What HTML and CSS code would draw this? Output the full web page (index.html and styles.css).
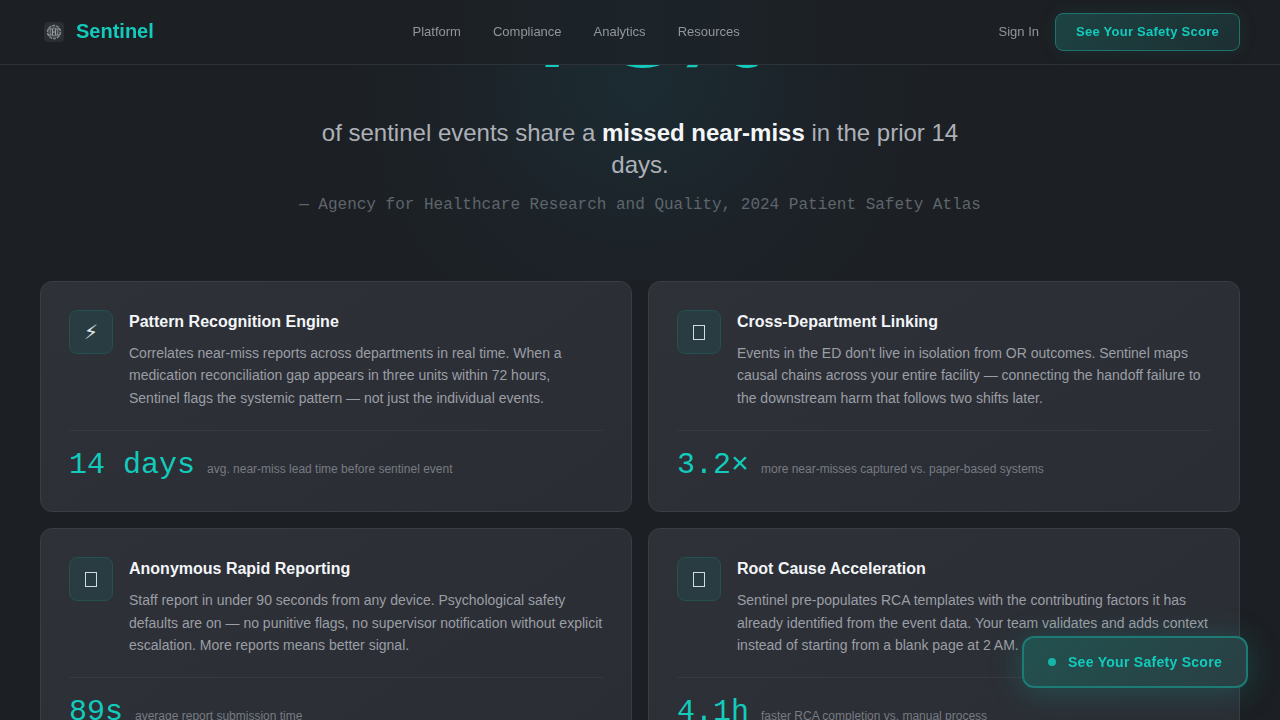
FILE: index.html
```html
<!DOCTYPE html>
<html lang="en">
<head>
    <meta charset="UTF-8">
    <meta name="viewport" content="width=device-width, initial-scale=1.0">
    <title>Sentinel</title>
    <link rel="stylesheet" href="styles.css">
</head>
<body>

<header class="header">
    <a class="logo" href="#">
        <svg class="logo-mark" viewBox="0 0 28 28" aria-hidden="true">
            <rect x="4" y="4" width="20" height="20" rx="4" fill="#2a2f33"/>
            <circle cx="14" cy="14" r="6.5" fill="#3d4245" stroke="#80868a" stroke-width="1.5" stroke-dasharray="3 1"/>
            <circle cx="14" cy="14" r="4" fill="none" stroke="#777d80" stroke-width="1"/>
            <path d="M8 11h3M17 11h3M8 17h3M17 17h3M12.5 11v6M15.5 11v6M12.5 14h3" stroke="#979c9f" stroke-width="1" fill="none"/>
        </svg>
        <span>Sentinel</span>
    </a>
    <nav class="nav">
        <a href="#">Platform</a>
        <a href="#">Compliance</a>
        <a href="#">Analytics</a>
        <a href="#">Resources</a>
    </nav>
    <div class="header-actions">
        <a class="sign-in" href="#">Sign In</a>
        <button type="button" class="score-btn">See Your Safety Score</button>
    </div>
</header>

<main>
    <section class="hero">
        <div class="hero-number">73%</div>
        <p class="hero-text">of sentinel events share a <strong>missed near-miss</strong> in the prior 14 days.</p>
        <p class="hero-source">— Agency for Healthcare Research and Quality, 2024 Patient Safety Atlas</p>
    </section>

    <section class="cards">
        <article class="card">
            <div class="card-top">
                <div class="card-icon">&#9889;&#xFE0E;</div>
                <div class="card-body">
                    <h2>Pattern Recognition Engine</h2>
                    <p>Correlates near-miss reports across departments in real time. When a medication reconciliation gap appears in three units within 72 hours, Sentinel flags the systemic pattern — not just the individual events.</p>
                </div>
            </div>
            <div class="card-stat">
                <span class="stat-value">14 days</span>
                <span class="stat-label">avg. near-miss lead time before sentinel event</span>
            </div>
        </article>

        <article class="card">
            <div class="card-top">
                <div class="card-icon"><svg width="12" height="15" viewBox="0 0 12 15"><rect x="0.5" y="0.5" width="11" height="14"/></svg></div>
                <div class="card-body">
                    <h2>Cross-Department Linking</h2>
                    <p>Events in the ED don't live in isolation from OR outcomes. Sentinel maps causal chains across your entire facility — connecting the handoff failure to the downstream harm that follows two shifts later.</p>
                </div>
            </div>
            <div class="card-stat">
                <span class="stat-value">3.2×</span>
                <span class="stat-label">more near-misses captured vs. paper-based systems</span>
            </div>
        </article>

        <article class="card">
            <div class="card-top">
                <div class="card-icon"><svg width="12" height="15" viewBox="0 0 12 15"><rect x="0.5" y="0.5" width="11" height="14"/></svg></div>
                <div class="card-body">
                    <h2>Anonymous Rapid Reporting</h2>
                    <p>Staff report in under 90 seconds from any device. Psychological safety defaults are on — no punitive flags, no supervisor notification without explicit escalation. More reports means better signal.</p>
                </div>
            </div>
            <div class="card-stat">
                <span class="stat-value">89s</span>
                <span class="stat-label">average report submission time</span>
            </div>
        </article>

        <article class="card">
            <div class="card-top">
                <div class="card-icon"><svg width="12" height="15" viewBox="0 0 12 15"><rect x="0.5" y="0.5" width="11" height="14"/></svg></div>
                <div class="card-body">
                    <h2>Root Cause Acceleration</h2>
                    <p>Sentinel pre-populates RCA templates with the contributing factors it has already identified from the event data. Your team validates and adds context instead of starting from a blank page at 2 AM.</p>
                </div>
            </div>
            <div class="card-stat">
                <span class="stat-value">4.1h</span>
                <span class="stat-label">faster RCA completion vs. manual process</span>
            </div>
        </article>
    </section>
</main>

<button type="button" class="floating-btn"><span class="dot"></span>See Your Safety Score</button>

</body>
</html>
```

FILE: styles.css
```css
* {
    box-sizing: border-box;
    margin: 0;
    padding: 0;
}

html {
    scrollbar-width: none;
}

body {
    font-family: "Liberation Sans", Arial, sans-serif;
    background-color: #1c1f23;
    color: #f3f5f7;
    overflow-x: hidden;
}

a {
    text-decoration: none;
}

button {
    font-family: inherit;
    font-weight: 700;
    letter-spacing: 0.02em;
    color: #12cbbd;
    cursor: pointer;
}

/* Header */
.header {
    position: fixed;
    top: 0;
    left: 0;
    right: 0;
    z-index: 10;
    display: flex;
    align-items: center;
    justify-content: space-between;
    height: 65px;
    padding: 0 40px 1px;
    background: linear-gradient(90deg, #1c1f23 30%, #1c2429 50%, #1c1f23 70%);
    border-bottom: 1px solid #2e3338;
}

.logo {
    display: flex;
    align-items: center;
    gap: 8px;
    font-size: 20px;
    font-weight: 700;
    color: #12cbbd;
}

.logo-mark {
    width: 28px;
    height: 28px;
}

.nav {
    display: flex;
    gap: 32px;
}

.nav a,
.sign-in {
    font-size: 13px;
    color: #92959b;
}

.header-actions {
    display: flex;
    align-items: center;
    gap: 16px;
}

.score-btn {
    height: 38px;
    padding: 0 20px;
    font-size: 13px;
    background: linear-gradient(135deg, #1d4343, #1d2f32);
    border: 1px solid #1f736e;
    border-radius: 8px;
    box-shadow: 0 0 20px rgba(25, 203, 187, 0.08);
}

/* Hero */
.hero {
    display: flex;
    flex-direction: column;
    align-items: center;
    margin-top: -43px;
    padding-bottom: 67px;
    text-align: center;
    background:
        radial-gradient(circle at 50% 100px, rgba(20, 184, 166, 0.05), transparent 200px),
        radial-gradient(circle at 50% 140px, rgba(28, 50, 66, 0.3), transparent 360px);
}

.hero-number {
    margin-bottom: 16px;
    font-family: "Liberation Mono", monospace;
    font-size: 144px;
    line-height: 1;
    letter-spacing: -0.03em;
    color: #12cbbd;
}

.hero-text {
    max-width: 680px;
    margin-bottom: 15px;
    font-size: 24px;
    line-height: 32px;
    color: #adb1b7;
}

.hero-text strong {
    color: #f3f5f7;
}

.hero-source {
    font-family: "Liberation Mono", monospace;
    font-size: 16px;
    line-height: 18px;
    color: #5f656b;
}

/* Cards */
.cards {
    display: grid;
    grid-template-columns: 1fr 1fr;
    gap: 16px;
    padding: 0 40px 80px;
}

.card {
    padding: 28px;
    background: linear-gradient(145deg, #2e3138, #2a2d34);
    border: 1px solid #3a3e43;
    border-radius: 12px;
}

.card-top {
    display: flex;
    gap: 16px;
    margin-bottom: 21px;
}

.card-icon {
    display: flex;
    flex-shrink: 0;
    align-items: center;
    justify-content: center;
    width: 44px;
    height: 44px;
    font-family: "DejaVu Sans", sans-serif;
    font-size: 20px;
    color: #e4eaec;
    background: #293c41;
    border: 1px solid #245150;
    border-radius: 8px;
}

.card-icon rect {
    fill: none;
    stroke: #d3dadc;
}

.card-body h2 {
    margin-bottom: 8px;
    font-size: 16px;
    line-height: 24px;
}

.card-body p {
    font-size: 14px;
    line-height: 1.6;
    color: #9b9ea5;
}

.card-stat {
    display: flex;
    align-items: baseline;
    gap: 12px;
    padding-top: 16px;
    border-top: 1px solid #363a40;
}

.stat-value {
    font-family: "Liberation Mono", monospace;
    font-size: 30px;
    line-height: 36px;
    color: #12cbbd;
}

.stat-label {
    font-size: 12px;
    color: #777b82;
}

/* Floating call to action */
.floating-btn {
    position: fixed;
    right: 32px;
    bottom: 32px;
    z-index: 5;
    display: flex;
    align-items: center;
    gap: 12px;
    height: 52px;
    padding: 0 24px;
    font-size: 14px;
    background: linear-gradient(135deg, #22514f, #293f43);
    border: 2px solid #1c7b75;
    border-radius: 12px;
    box-shadow: 0 4px 32px rgba(20, 184, 166, 0.25);
}

.dot {
    width: 8px;
    height: 8px;
    border-radius: 50%;
    background: #17b5a8;
}
```
